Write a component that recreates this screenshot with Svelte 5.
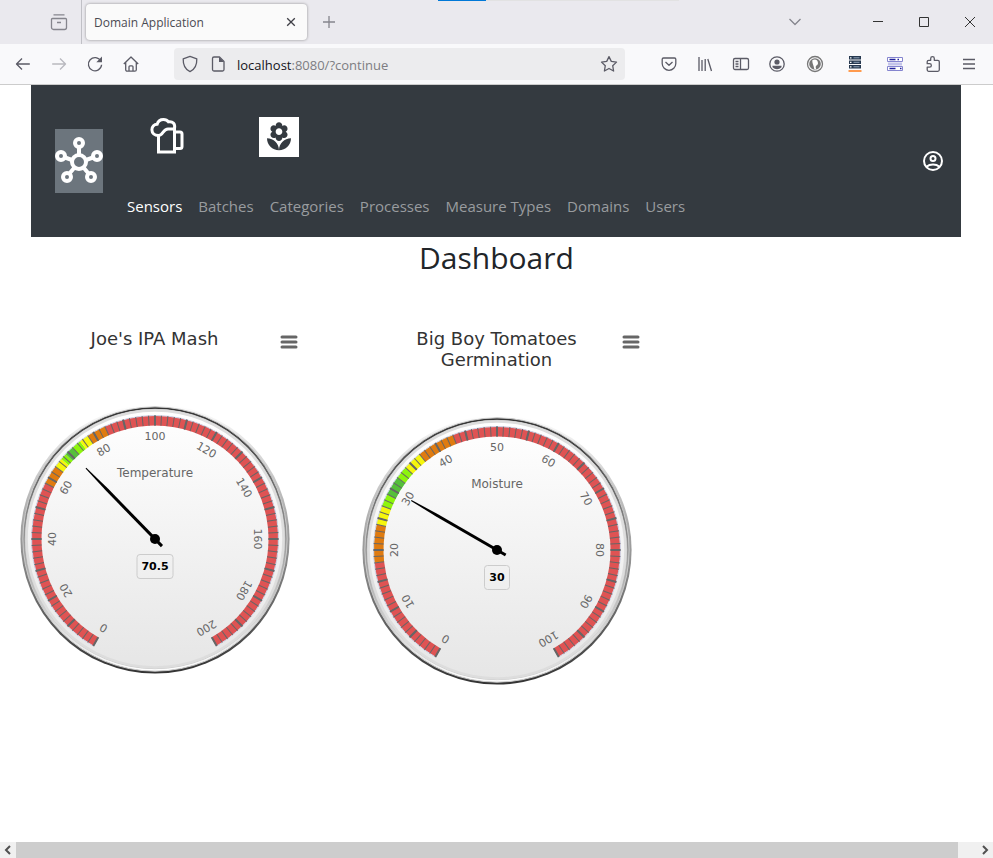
<script>
  const R = 123.5;
  const links = ['Sensors', 'Batches', 'Categories', 'Processes', 'Measure Types', 'Domains', 'Users'];
  const palette = ['#df5353', '#df7b10', '#f6f60c', '#8df50c', '#55bf3b', '#8df50c', '#f6f60c', '#df7b10', '#df5353'];
  const gauges = [
    { id: 'temperature', title: "Joe's IPA Mash", label: 'Temperature', max: 200, value: 70.5, box: 36, stops: [0, 58, 64, 67, 69, 72, 75, 78, 84, 200] },
    { id: 'moisture', title: 'Big Boy Tomatoes Germination', label: 'Moisture', max: 100, value: 30, box: 25, stops: [0, 18, 24, 27, 29, 32, 34, 37, 43, 100] }
  ];
  const minorTicks = Array.from({ length: 101 }, (_, i) => -150 + i * 3);
  const majorTicks = Array.from({ length: 21 }, (_, i) => -150 + i * 15);
  const labelSteps = Array.from({ length: 11 }, (_, i) => i);

  function point(deg, r) {
    const a = (deg * Math.PI) / 180;
    return `${(Math.sin(a) * r).toFixed(2)} ${(-Math.cos(a) * r).toFixed(2)}`;
  }
  function arc(from, to, r) {
    return `M${point(from, r)}A${r} ${r} 0 ${to - from > 180 ? 1 : 0} 1 ${point(to, r)}`;
  }
  function angle(value, max) {
    return -150 + (value / max) * 300;
  }
</script>

<div class="window">
  <header>
    <div class="tabs">
      <span class="snap"><i></i></span>
      <button class="view" aria-label="Tab overview">
        <svg width="18" height="18" viewBox="0 0 18 18"><path d="M3.5 1.8h11M2.5 5.500h13a1 1 0 0 1 1 1v8a2 2 0 0 1-2 2h-11a2 2 0 0 1-2-2v-8a1 1 0 0 1 1-1zM7 9.500h4" /></svg>
      </button>
      <div class="tab">
        <span>Domain Application</span>
        <button aria-label="Close tab"><svg width="10" height="10" viewBox="0 0 10 10"><path d="M1.200 1.200l7.600 7.600M8.800 1.200L1.200 8.800" /></svg></button>
      </div>
      <button class="plus" aria-label="New tab"><svg width="12" height="12" viewBox="0 0 12 12"><path d="M6 0v12M0 6h12" /></svg></button>
      <span class="space"></span>
      <button class="list" aria-label="List all tabs"><svg width="14" height="14" viewBox="0 0 14 14"><path d="M1.500 4l5.500 5.500L12.500 4" /></svg></button>
      <button class="sys" aria-label="Minimize"><svg width="10" height="10" viewBox="0 0 10 10"><path d="M0 4.500h10" /></svg></button>
      <button class="sys" aria-label="Maximize"><svg width="10" height="10" viewBox="0 0 10 10"><path d="M.5.500h9v9h-9z" /></svg></button>
      <button class="sys" aria-label="Close"><svg width="10" height="10" viewBox="0 0 10 10"><path d="M0 0l10 10M10 0L0 10" /></svg></button>
    </div>

    <div class="toolbar">
      <button aria-label="Back"><svg viewBox="0 0 18 18"><path d="M2.500 9h13.300M8 3.500L2.500 9 8 14.500" /></svg></button>
      <button class="off" aria-label="Forward"><svg viewBox="0 0 18 18"><path d="M2.200 9h13.300M10 3.500L15.500 9 10 14.500" /></svg></button>
      <button aria-label="Reload"><svg viewBox="0 0 18 18"><path d="M14.800 6A6.600 6.600 0 1 0 15.600 9.800" /><path class="fill" d="M16 1.500v5.700h-5.700z" /></svg></button>
      <button aria-label="Home"><svg viewBox="0 0 18 18"><path d="M1.800 9L9 2l7.200 7M3.700 7.500v7.200a1.500 1.500 0 0 0 1.500 1.500h7.600a1.500 1.500 0 0 0 1.500-1.500V7.500M7 16v-4.200a1 1 0 0 1 1-1h2a1 1 0 0 1 1 1V16" /></svg></button>
      <div class="url">
        <svg viewBox="0 0 18 18"><path d="M9 1.300L15.800 3.800c.2 5.300-1.500 10.500-6.800 12.800C3.700 14.300 2 9.100 2.200 3.800z" /></svg>
        <svg viewBox="0 0 18 18"><path d="M5 2h5.500l4.500 4.500V14.500a1.500 1.500 0 0 1-1.500 1.500H5a1.500 1.500 0 0 1-1.500-1.500V3.500A1.500 1.500 0 0 1 5 2z" /><path class="fill" d="M10 2v5h5z" /></svg>
        <a href="#address"><b>localhost</b>:8080/?continue</a>
        <button aria-label="Bookmark this page"><svg viewBox="0 0 18 18"><path d="M9 1.600l2.300 4.800 5.200.7-3.800 3.600.9 5.300L9 13.500 4.400 16l.9-5.300L1.500 7.100l5.200-.7z" /></svg></button>
      </div>
      <button aria-label="Save to Pocket"><svg viewBox="0 0 18 18"><path d="M3.500 3h11A1.300 1.300 0 0 1 15.800 4.300V8.500a6.800 6.800 0 0 1-13.600 0V4.300A1.300 1.300 0 0 1 3.500 3zM5.500 7L9 10.300 12.500 7" /></svg></button>
      <button aria-label="Library"><svg viewBox="0 0 18 18"><path d="M3 2v14M6 5v11M9.200 4v12M11.800 4l3.700 12" /></svg></button>
      <button aria-label="Sidebars"><svg viewBox="0 0 18 18"><path d="M3 3.500h12a1.500 1.500 0 0 1 1.500 1.500v8a1.500 1.500 0 0 1-1.500 1.500H3A1.500 1.500 0 0 1 1.500 13V5A1.500 1.500 0 0 1 3 3.500zM8.500 3.500v11M3.500 6.500h3M3.500 9h3M3.500 11.500h3" /></svg></button>
      <button aria-label="Account"><svg viewBox="0 0 18 18"><circle cx="9" cy="9" r="7.200" /><circle class="fill" cx="9" cy="7" r="2.600" /><path class="fill" d="M4.500 10.800h9v1.500c-2.500 2.600-6.500 2.600-9 0z" /></svg></button>
      <button class="ext" aria-label="DuckDuckGo">
        <svg viewBox="0 0 18 18">
          <circle cx="9" cy="9" r="7.500" stroke="#777" />
          <circle cx="9" cy="9" r="5.800" fill="#777" stroke="none" />
          <path d="M6.500 5c3-1.500 5.500 0 5.500 3.300 0 1.700-1.500 2.200-2 2.700s-.2 2 .3 3.600L8.300 14.200C8 11 5.700 7.500 6.500 5z" fill="#fff" stroke="none" />
        </svg>
      </button>
      <button class="ext" aria-label="Server switcher">
        <svg viewBox="0 0 18 18">
          <path d="M3 1h12v3.500H3zM3 5.500h12V9H3zM3 10h12v3.500H3z" fill="#26384f" stroke="none" />
          <path d="M7.500 2.800h6M7.500 7.300h6M7.500 11.800h6" stroke="#8fa3ba" stroke-width="1" />
          <path d="M4 2.800h1.500M4 7.300h1.500M4 11.800h1.500" stroke="#fff" />
          <path d="M2.500 16h13" stroke="#ff9a4d" stroke-width="2" />
        </svg>
      </button>
      <button class="ext" aria-label="Proxy settings">
        <svg viewBox="0 0 18 18">
          <path d="M2 9h14" stroke="#c4c4ea" stroke-width="3" />
          <path d="M1.500 2.500h15v4h-15zM1.500 11.500h15v4h-15z" stroke="#8585cf" stroke-width="1" fill="#fff" />
          <path d="M3.500 4.500h6M3.500 13.500h6M11.500 4.500H13M14 13.500h1.500" stroke="#22229c" />
        </svg>
      </button>
      <button aria-label="Extensions"><svg viewBox="0 0 18 18"><path d="M6.700 5.300V3.500a1.800 1.800 0 0 1 3.600 0v1.800h3.500a1.500 1.500 0 0 1 1.500 1.500v8a1.500 1.500 0 0 1-1.500 1.500H4.700a1.500 1.500 0 0 1-1.500-1.500v-2.600h2.400a1.700 1.700 0 0 0 0-3.500H3.200V6.800a1.500 1.500 0 0 1 1.500-1.500z" /></svg></button>
      <button aria-label="Application menu"><svg viewBox="0 0 18 18"><path d="M3 4.500h12M3 9h12M3 13.500h12" /></svg></button>
    </div>
  </header>

  <main>
    <nav>
      <a class="brand" href="#home" aria-label="Home">
        <svg width="48" height="64" viewBox="0 0 48 64">
          <path d="M24 18v9M10 28.500l7 2.500M38 28.500L31 31M14.500 44.500l5-6M33.500 44.500l-5-6" />
          <circle cx="24" cy="33" r="7" />
          <circle cx="24" cy="14" r="4" /><circle cx="6" cy="27" r="4" /><circle cx="42" cy="27" r="4" />
          <circle cx="12" cy="48" r="4" /><circle cx="36" cy="48" r="4" />
        </svg>
      </a>
      <div class="menu">
        <div class="domains">
          <button aria-label="Brewing">
            <svg class="beer" width="36" height="40" viewBox="0 0 36 40">
              <path d="M8.500 18.500C4.500 18.500 1.900 16 1.900 12.800 1.900 9.500 4.200 7.400 7.200 7.200 8 4 10.500 2.400 13.500 2.400c2.200 0 4 1 5 2.400 4-.8 7 2 6 6.700" />
              <path d="M8.500 18.500C13 18.500 13 12 18 12h6.500v23h-16z" />
              <path d="M24.500 15H30a2 2 0 0 1 2 2v12.500a2 2 0 0 1-2 2h-5.500" />
            </svg>
          </button>
          <button class="flower" aria-label="Gardening">
            <svg width="32" height="32" viewBox="0 0 24 24"><path d="M12 22c4.970 0 9-4.030 9-9-4.970 0-9 4.030-9 9zM5.600 10.250c0 1.380 1.120 2.500 2.500 2.500.530 0 1.010-.160 1.420-.440l-.020.190c0 1.380 1.120 2.500 2.500 2.500s2.500-1.120 2.500-2.500l-.020-.190c.4.280.890.440 1.420.440 1.380 0 2.500-1.120 2.500-2.500 0-1-.590-1.850-1.430-2.250.840-.4 1.430-1.250 1.430-2.250 0-1.380-1.120-2.500-2.500-2.500-.530 0-1.010.160-1.420.440l.020-.190C14.500 2.120 13.380 1 12 1S9.500 2.120 9.500 3.500l.020.190c-.4-.280-.890-.440-1.420-.440-1.380 0-2.500 1.120-2.500 2.500 0 1 .590 1.850 1.430 2.250-.840.4-1.430 1.250-1.430 2.250zM12 5.500c1.380 0 2.500 1.120 2.500 2.500s-1.120 2.500-2.500 2.500S9.500 9.380 9.500 8s1.120-2.500 2.500-2.500zM3 13c0 4.970 4.030 9 9 9 0-4.970-4.030-9-9-9z" /></svg>
          </button>
        </div>
        <div class="links">
          {#each links as link, i}
            <a href="#{link}" class:active={i === 0}>{link}</a>
          {/each}
        </div>
      </div>
      <button class="user" aria-label="Profile">
        <svg width="20" height="20" viewBox="0 0 20 20"><circle cx="10" cy="10" r="9" /><circle cx="10" cy="7.500" r="2.500" /><path d="M3.500 15.700c3.500-3 9.500-3 13 0" /></svg>
      </button>
    </nav>

    <h1>Dashboard</h1>

    <section>
      {#each gauges as g (g.id)}
        <figure>
          <figcaption>
            <h2>{g.title}</h2>
            <button aria-label="Chart menu"><svg width="18" height="14" viewBox="0 0 18 14"><path d="M2 2h14M2 7h14M2 12h14" /></svg></button>
          </figcaption>
          <svg class="gauge" viewBox="-135 -135 270 270" role="img" aria-label={g.label}>
            <defs>
              <linearGradient id="{g.id}-rim" x1="0" y1="0" x2="0" y2="1"><stop offset="0" stop-color="#fff" /><stop offset="1" stop-color="#333" /></linearGradient>
              <linearGradient id="{g.id}-bevel" x1="0" y1="0" x2="0" y2="1"><stop offset="0" stop-color="#333" /><stop offset="1" stop-color="#fff" /></linearGradient>
              <linearGradient id="{g.id}-face" x1="0" y1="0" x2="0" y2="1"><stop offset="0" stop-color="#fff" /><stop offset="1" stop-color="#e6e6e6" /></linearGradient>
            </defs>
            <circle r={R * 1.09} fill="url(#{g.id}-rim)" />
            <circle r={R * 1.07} fill="url(#{g.id}-bevel)" stroke="#ccc" />
            <circle r={R * 1.05} fill="url(#{g.id}-face)" stroke="#ccc" />
            <circle r={R * 1.04} fill="none" stroke="#ddd" stroke-width={R * 0.02} />
            {#each palette as colour, i}
              <path d={arc(angle(g.stops[i], g.max), angle(g.stops[i + 1], g.max), R - 5)} fill="none" stroke={colour} stroke-width="10" />
            {/each}
            <path d={arc(-150, 150, R)} fill="none" stroke="#ccd6eb" />
            {#each minorTicks as deg}
              <path d="M0 {-R}v10" transform="rotate({deg})" stroke="#666" />
            {/each}
            {#each majorTicks as deg}
              <path d="M0 {-R}v10" transform="rotate({deg})" stroke="#666" stroke-width="2" />
            {/each}
            {#each labelSteps as s}
              <text class="num" y="-99" transform="rotate({-150 + s * 30})">{(s * g.max) / 10}</text>
            {/each}
            <text class="name" y="-62">{g.label}</text>
            <rect x={-g.box / 2} y="15.5" width={g.box} height="24" rx="3" fill="none" stroke="#ccc" />
            <text class="value" y="31">{g.value}</text>
            <path d="M-1.500 10L-1.500 -69L-.5 -99H.5L1.500 -69V10z" transform="rotate({angle(g.value, g.max)})" />
            <circle r="5" />
          </svg>
        </figure>
      {/each}
    </section>
  </main>

  <footer>
    <button aria-label="Scroll left"><svg width="8" height="10" viewBox="0 0 8 10"><path d="M6 1L2 5l4 4" /></svg></button>
    <div class="thumb"></div>
    <button class="right" aria-label="Scroll right"><svg width="8" height="10" viewBox="0 0 8 10"><path d="M2 1l4 4-4 4" /></svg></button>
  </footer>
</div>

<style>
  .window {
    display: flex;
    flex-direction: column;
    min-height: 100vh;
    background: #fff;
    font-family: 'Open Sans', 'Noto Sans', sans-serif;
  }
  button {
    display: flex;
    align-items: center;
    justify-content: center;
    padding: 0;
    border: 0;
    background: none;
    flex: none;
  }
  a { text-decoration: none; }
  header svg { fill: none; stroke: #5b5b66; stroke-width: 1.3; flex: none; stroke-linejoin: round; }
  header .fill { fill: #5b5b66; stroke: none; }

  .tabs {
    position: relative;
    display: flex;
    align-items: center;
    height: 44px;
    background: #eae9ee;
  }
  .snap {
    position: absolute;
    top: 0;
    left: 438px;
    width: 241px;
    height: 1px;
    background: #e2e2e2;
  }
  .snap i { display: block; width: 48px; height: 1px; background: #0078d7; }
  .view {
    width: 82px;
    height: 44px;
    padding-left: 36px;
    border-right: 1px solid #c0c0c6;
    box-sizing: border-box;
  }
  .view svg, .plus svg, .list svg { stroke: #85858d; }
  .tab {
    display: flex;
    align-items: center;
    justify-content: space-between;
    flex: 0 1 221px;
    height: 36px;
    margin-left: 4px;
    padding: 0 11px 0 8px;
    box-sizing: border-box;
    border-radius: 4px;
    background: #fafafa;
    box-shadow: 0 0 3px #0006;
    font-size: 12px;
    color: #4a4a52;
    white-space: nowrap;
  }
  .tab svg { stroke: #3f3f46; }
  .plus { width: 44px; height: 36px; }
  .space { flex: 1; }
  .list { width: 36px; height: 36px; margin-right: 42px; }
  .sys { width: 46px; height: 44px; }
  .sys svg { stroke: #333; stroke-width: 1; stroke-linejoin: miter; }

  .toolbar {
    display: flex;
    align-items: center;
    height: 40px;
    padding: 0 6px 0 5px;
    border-bottom: 1px solid #ccc;
    background: #f9f9fb;
  }
  .toolbar button { width: 36px; height: 36px; }
  .toolbar .ext { width: 40px; }
  .toolbar svg { width: 18px; height: 18px; }
  .toolbar .off { opacity: 0.4; }
  .toolbar .url {
    display: flex;
    align-items: center;
    flex: 1;
    min-width: 0;
    height: 32px;
    margin: 0 26px 0 25px;
    padding-left: 7px;
    box-sizing: border-box;
    border-radius: 4px;
    background: #ececee;
  }
  .url svg { margin-right: 10px; }
  .url button { width: 32px; margin-left: auto; }
  .url button svg { margin: 0; }
  .url a { padding-top: 2px; font-size: 13px; color: #7d7d82; }
  .url b { font-weight: 400; color: #15141a; }

  main { flex: 1; }
  nav {
    display: flex;
    align-items: center;
    margin: 0 32px 0 31px;
    padding: 0 18px 0 24px;
    background: #343a40;
  }
  .brand { display: flex; background: #6c757d; }
  .brand svg, .beer, .user svg { fill: none; stroke: #fff; }
  .brand svg { stroke-width: 4; }
  .menu { flex: 1; padding: 32px 0 11px 16px; }
  .domains { display: flex; gap: 73px; height: 40px; margin: 0 0 29px 31px; }
  .beer { stroke-width: 3; }
  .flower { width: 40px; background: #fff; }
  .flower svg { fill: #343a40; }
  .links { display: flex; }
  .links a {
    padding: 8px;
    font-size: 15px;
    line-height: 24px;
    color: #999c9f;
    white-space: nowrap;
  }
  .links .active { color: #fff; }
  .user svg { stroke-width: 2; }

  h1 {
    margin: 0;
    font-size: 30px;
    line-height: 42px;
    font-weight: 400;
    text-align: center;
    color: #212529;
  }
  section { display: flex; flex-wrap: wrap; gap: 33px; padding-top: 49px; }
  figure {
    display: flex;
    flex-direction: column;
    width: 309px;
    height: 401px;
    margin: 0;
    font-family: 'DejaVu Sans', sans-serif;
  }
  figcaption { display: grid; grid-template-columns: 1fr 192px 1fr; }
  h2 {
    grid-column: 2;
    margin: 0;
    font-size: 18px;
    line-height: 21px;
    font-weight: 400;
    text-align: center;
    color: #333;
  }
  figcaption button { justify-self: end; width: 24px; height: 28px; margin: 0 8px -7px 0; }
  figcaption svg { fill: none; stroke: #666; stroke-width: 3; stroke-linecap: round; }
  .gauge { width: 270px; height: 270px; margin: auto; }
  .gauge text { text-anchor: middle; }
  .num { font-size: 11px; fill: #666; }
  .name { font-size: 12px; fill: #666; }
  .value { font-size: 11px; font-weight: 700; }

  footer { display: flex; height: 16px; background: #f0f0f0; }
  footer button { width: 16px; }
  footer .right { margin-left: 19px; }
  footer svg { fill: none; stroke: #505050; stroke-width: 2; }
  .thumb { flex: 1; background: #cdcdcd; }
</style>
